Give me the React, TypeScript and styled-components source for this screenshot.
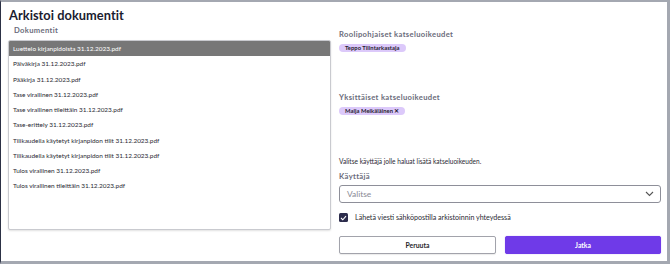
import React from "react";
import styled, { createGlobalStyle } from "styled-components";

const Global = createGlobalStyle`
  html, body { margin: 0; padding: 0; background: #ffffff; }
  * { box-sizing: border-box; }
  body { font-family: Lato, "Open Sans", "Liberation Sans", sans-serif; }
`;

const Frame = styled.div`
  width: 670px;
  height: 264px;
  background: #ffffff;
  border-top: 2px solid #a4a8b1;
  border-right: 3px solid #a4a8b1;
  border-bottom: 3px solid #a4a8b1;
  border-left: 1px solid #2c3145;
  display: flex;
  flex-direction: column;
  overflow: hidden;
`;

const Title = styled.h1`
  margin: 0;
  padding: 5px 0 0 8px;
  height: 23px;
  font-size: 12.8px;
  line-height: 16px;
  font-weight: 700;
  color: #1b1c30;
  letter-spacing: 0.05px;
`;

const Body = styled.div`
  display: flex;
  gap: 8px;
  padding: 0 0 0 7px;
`;

const LeftCol = styled.div`
  width: 323px;
  display: flex;
  flex-direction: column;
`;

const RightCol = styled.div`
  width: 322px;
  display: flex;
  flex-direction: column;
`;

const Label = styled.div<{ $mt?: number; $pl?: number }>`
  margin-top: ${(p) => p.$mt ?? 0}px;
  padding-left: ${(p) => p.$pl ?? 0}px;
  height: 10px;
  line-height: 10px;
  font-size: 7.6px;
  font-weight: 700;
  color: #6a6b7a;
  letter-spacing: 0.35px;
`;

const List = styled.div`
  margin-top: 5px;
  height: 190px;
  border: 1px solid #c9cacf;
  border-radius: 2px;
  box-shadow: 0 1px 2px rgba(0, 0, 0, 0.12);
  background: #fff;
  overflow: hidden;
`;

const Row = styled.div<{ $selected?: boolean }>`
  height: 15.25px;
  line-height: 15.25px;
  padding-left: 4px;
  font-size: 6.45px;
  color: ${(p) => (p.$selected ? "#ffffff" : "#2a2a33")};
  background: ${(p) => (p.$selected ? "#777777" : "transparent")};
  white-space: nowrap;
`;

const Chip = styled.div<{ $mt?: number }>`
  margin-top: ${(p) => p.$mt ?? 0}px;
  align-self: flex-start;
  height: 8px;
  line-height: 8px;
  padding: 0 6px;
  border-radius: 4px;
  background: #dcc9fa;
  font-size: 5.8px;
  font-weight: 700;
  color: #1f1b2e;
  letter-spacing: 0.05px;
`;

const Help = styled.div<{ $mt?: number }>`
  margin-top: ${(p) => p.$mt ?? 0}px;
  height: 9px;
  line-height: 9px;
  font-size: 6.55px;
  color: #2a2a33;
`;

const Select = styled.div`
  margin-top: 4px;
  height: 18px;
  border: 1px solid #8e8f99;
  border-radius: 3px;
  display: flex;
  align-items: center;
  justify-content: space-between;
  padding: 0 6px 0 7px;
  font-size: 8.4px;
  color: #8a8a95;
`;

const CheckRow = styled.div`
  margin-top: 10px;
  display: flex;
  align-items: center;
  gap: 7px;
  height: 9px;
`;

const Box = styled.div`
  width: 9px;
  height: 9px;
  border-radius: 1.5px;
  background: #2c2c4c;
  display: flex;
  align-items: center;
  justify-content: center;
`;

const CheckLabel = styled.span`
  font-size: 7.1px;
  color: #2a2a33;
  line-height: 9px;
`;

const Buttons = styled.div`
  margin-top: 14px;
  display: grid;
  grid-template-columns: 157px 156px;
  column-gap: 9px;
`;

const Button = styled.button<{ $primary?: boolean }>`
  height: 18px;
  border-radius: 2px;
  border: 1px solid ${(p) => (p.$primary ? "#6f3ae8" : "#a2a3ab")};
  background: ${(p) => (p.$primary ? "#6f3ae8" : "#ffffff")};
  color: ${(p) => (p.$primary ? "#ffffff" : "#1f1f2a")};
  font-family: inherit;
  font-size: 6.8px;
  font-weight: 700;
  padding: 0;
  box-shadow: ${(p) => (p.$primary ? "0 0 1px rgba(111,58,232,0.6)" : "0 1px 1px rgba(0,0,0,0.08)")};
`;

const files = [
  "Luettelo kirjanpidoista 31.12.2023.pdf",
  "Päiväkirja 31.12.2023.pdf",
  "Pääkirja 31.12.2023.pdf",
  "Tase virallinen 31.12.2023.pdf",
  "Tase virallinen tileittäin 31.12.2023.pdf",
  "Tase-erittely 31.12.2023.pdf",
  "Tilikaudella käytetyt kirjanpidon tilit 31.12.2023.pdf",
  "Tilikaudella käytetyt kirjanpidon tilit 31.12.2023.pdf",
  "Tulos virallinen 31.12.2023.pdf",
  "Tulos virallinen tileittäin 31.12.2023.pdf",
];

export default function App() {
  return (
    <>
      <Global />
      <Frame>
        <Title>Arkistoi dokumentit</Title>
        <Body>
          <LeftCol>
            <Label $pl={6}>Dokumentit</Label>
            <List>
              {files.map((f, i) => (
                <Row key={i} $selected={i === 0}>
                  {f}
                </Row>
              ))}
            </List>
          </LeftCol>
          <RightCol>
            <Label $mt={4}>Roolipohjaiset katseluoikeudet</Label>
            <Chip $mt={5}>Teppo Tilintarkastaja</Chip>
            <Label $mt={40}>Yksittäiset katseluoikeudet</Label>
            <Chip $mt={5}>Maija Meikäläinen ✕</Chip>
            <Help $mt={42}>Valitse käyttäjä jolle haluat lisätä katseluoikeuden.</Help>
            <Label $mt={5}>Käyttäjä</Label>
            <Select>
              <span>Valitse</span>
              <svg width="9" height="6" viewBox="0 0 9 6">
                <path d="M1 1 L4.5 4.5 L8 1" fill="none" stroke="#555" strokeWidth="1.1" />
              </svg>
            </Select>
            <CheckRow>
              <Box>
                <svg width="7" height="6" viewBox="0 0 7 6">
                  <path d="M1 3 L2.8 4.8 L6 1.2" fill="none" stroke="#fff" strokeWidth="1.1" />
                </svg>
              </Box>
              <CheckLabel>Lähetä viesti sähköpostilla arkistoinnin yhteydessä</CheckLabel>
            </CheckRow>
            <Buttons>
              <Button>Peruuta</Button>
              <Button $primary>Jatka</Button>
            </Buttons>
          </RightCol>
        </Body>
      </Frame>
    </>
  );
}
